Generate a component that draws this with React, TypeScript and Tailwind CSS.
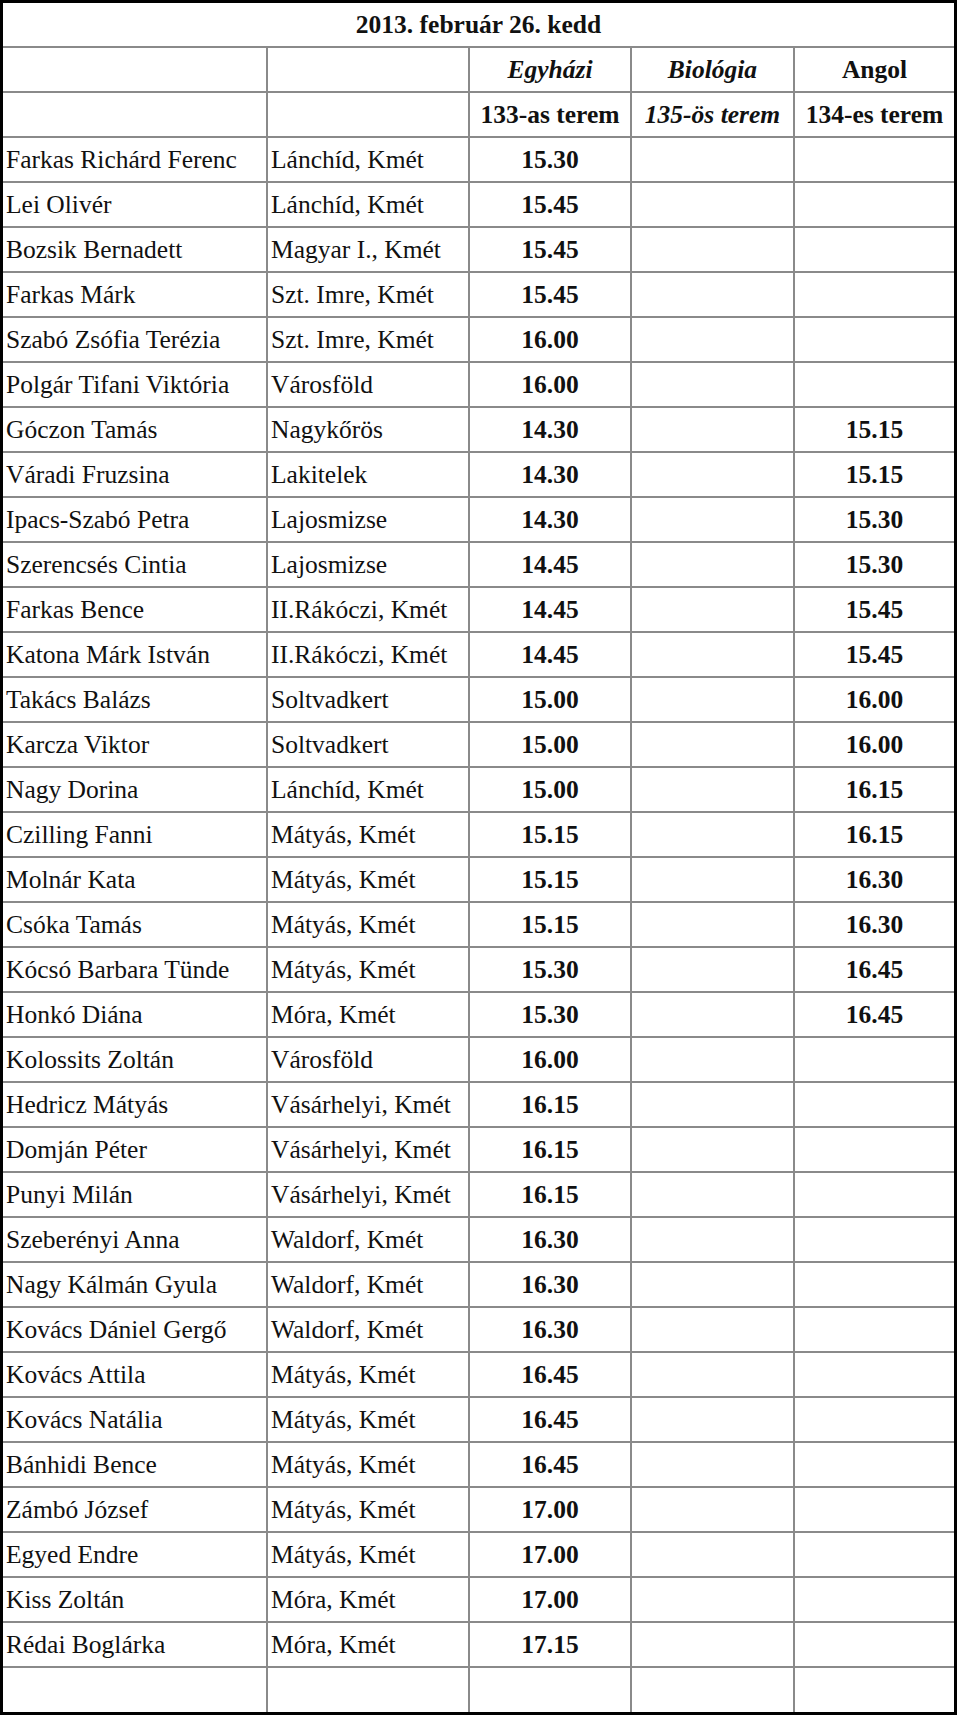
const rows: [string, string, string, string][] = [
  ["Farkas Richárd Ferenc", "Lánchíd, Kmét", "15.30", ""],
  ["Lei Olivér", "Lánchíd, Kmét", "15.45", ""],
  ["Bozsik Bernadett", "Magyar I., Kmét", "15.45", ""],
  ["Farkas Márk", "Szt. Imre, Kmét", "15.45", ""],
  ["Szabó Zsófia Terézia", "Szt. Imre, Kmét", "16.00", ""],
  ["Polgár Tifani Viktória", "Városföld", "16.00", ""],
  ["Góczon Tamás", "Nagykőrös", "14.30", "15.15"],
  ["Váradi Fruzsina", "Lakitelek", "14.30", "15.15"],
  ["Ipacs-Szabó Petra", "Lajosmizse", "14.30", "15.30"],
  ["Szerencsés Cintia", "Lajosmizse", "14.45", "15.30"],
  ["Farkas Bence", "II.Rákóczi, Kmét", "14.45", "15.45"],
  ["Katona Márk István", "II.Rákóczi, Kmét", "14.45", "15.45"],
  ["Takács Balázs", "Soltvadkert", "15.00", "16.00"],
  ["Karcza Viktor", "Soltvadkert", "15.00", "16.00"],
  ["Nagy Dorina", "Lánchíd, Kmét", "15.00", "16.15"],
  ["Czilling Fanni", "Mátyás, Kmét", "15.15", "16.15"],
  ["Molnár Kata", "Mátyás, Kmét", "15.15", "16.30"],
  ["Csóka Tamás", "Mátyás, Kmét", "15.15", "16.30"],
  ["Kócsó Barbara Tünde", "Mátyás, Kmét", "15.30", "16.45"],
  ["Honkó Diána", "Móra, Kmét", "15.30", "16.45"],
  ["Kolossits Zoltán", "Városföld", "16.00", ""],
  ["Hedricz Mátyás", "Vásárhelyi, Kmét", "16.15", ""],
  ["Domján Péter", "Vásárhelyi, Kmét", "16.15", ""],
  ["Punyi Milán", "Vásárhelyi, Kmét", "16.15", ""],
  ["Szeberényi Anna", "Waldorf, Kmét", "16.30", ""],
  ["Nagy Kálmán Gyula", "Waldorf, Kmét", "16.30", ""],
  ["Kovács Dániel Gergő", "Waldorf, Kmét", "16.30", ""],
  ["Kovács Attila", "Mátyás, Kmét", "16.45", ""],
  ["Kovács Natália", "Mátyás, Kmét", "16.45", ""],
  ["Bánhidi Bence", "Mátyás, Kmét", "16.45", ""],
  ["Zámbó József", "Mátyás, Kmét", "17.00", ""],
  ["Egyed Endre", "Mátyás, Kmét", "17.00", ""],
  ["Kiss Zoltán", "Móra, Kmét", "17.00", ""],
  ["Rédai Boglárka", "Móra, Kmét", "17.15", ""],
]

// widths include the 2px right rule of each cell
const c1 = "w-[265px] shrink-0 border-r-2 border-[#8a8a8a] pl-[3px]"
const c2 = "w-[202px] shrink-0 border-r-2 border-[#8a8a8a] pl-[3px]"
const c3 = "w-[162px] shrink-0 border-r-2 border-[#8a8a8a] text-center font-bold"
const c4 = "w-[163px] shrink-0 border-r-2 border-[#8a8a8a] text-center font-bold"
const c5 = "w-[159px] shrink-0 text-center font-bold"
const row = "flex h-[45px] items-center border-b-2 border-[#8a8a8a]"

function Row({ cells, last }: { cells: string[]; last?: boolean }) {
  return (
    <div className={last ? "flex h-[44px] items-stretch" : "flex h-[45px] items-stretch border-b-2 border-[#8a8a8a]"}>
      <div className={`${c1} flex items-center whitespace-nowrap`}>{cells[0]}</div>
      <div className={`${c2} flex items-center whitespace-nowrap`}>{cells[1]}</div>
      <div className={`${c3} flex items-center justify-center`}>{cells[2]}</div>
      <div className={`${c4} flex items-center justify-center`}></div>
      <div className={`${c5} flex items-center justify-center`}>{cells[3]}</div>
    </div>
  )
}

export default function App() {
  return (
    <div className="min-h-[1717px] bg-white font-['Liberation_Serif','Times_New_Roman',serif] text-[25.5px] leading-none text-[#111]">
      <div className="w-[957px] border-[3px] border-black">
        <div className={`${row} h-[44px] justify-center font-bold`}>2013. február 26. kedd</div>
        <div className="flex h-[45px] items-stretch border-b-2 border-[#8a8a8a]">
          <div className={c1} />
          <div className={c2} />
          <div className={`${c3} flex items-center justify-center italic`}>Egyházi</div>
          <div className={`${c4} flex items-center justify-center italic`}>Biológia</div>
          <div className={`${c5} flex items-center justify-center`}>Angol</div>
        </div>
        <div className="flex h-[45px] items-stretch border-b-2 border-[#8a8a8a]">
          <div className={c1} />
          <div className={c2} />
          <div className={`${c3} flex items-center justify-center`}>133-as terem</div>
          <div className={`${c4} flex items-center justify-center italic`}>135-ös terem</div>
          <div className={`${c5} flex items-center justify-center`}>134-es terem</div>
        </div>
        {rows.map((r, i) => (
          <Row key={i} cells={r} />
        ))}
        <Row cells={["", "", "", ""]} last />
      </div>
    </div>
  )
}
